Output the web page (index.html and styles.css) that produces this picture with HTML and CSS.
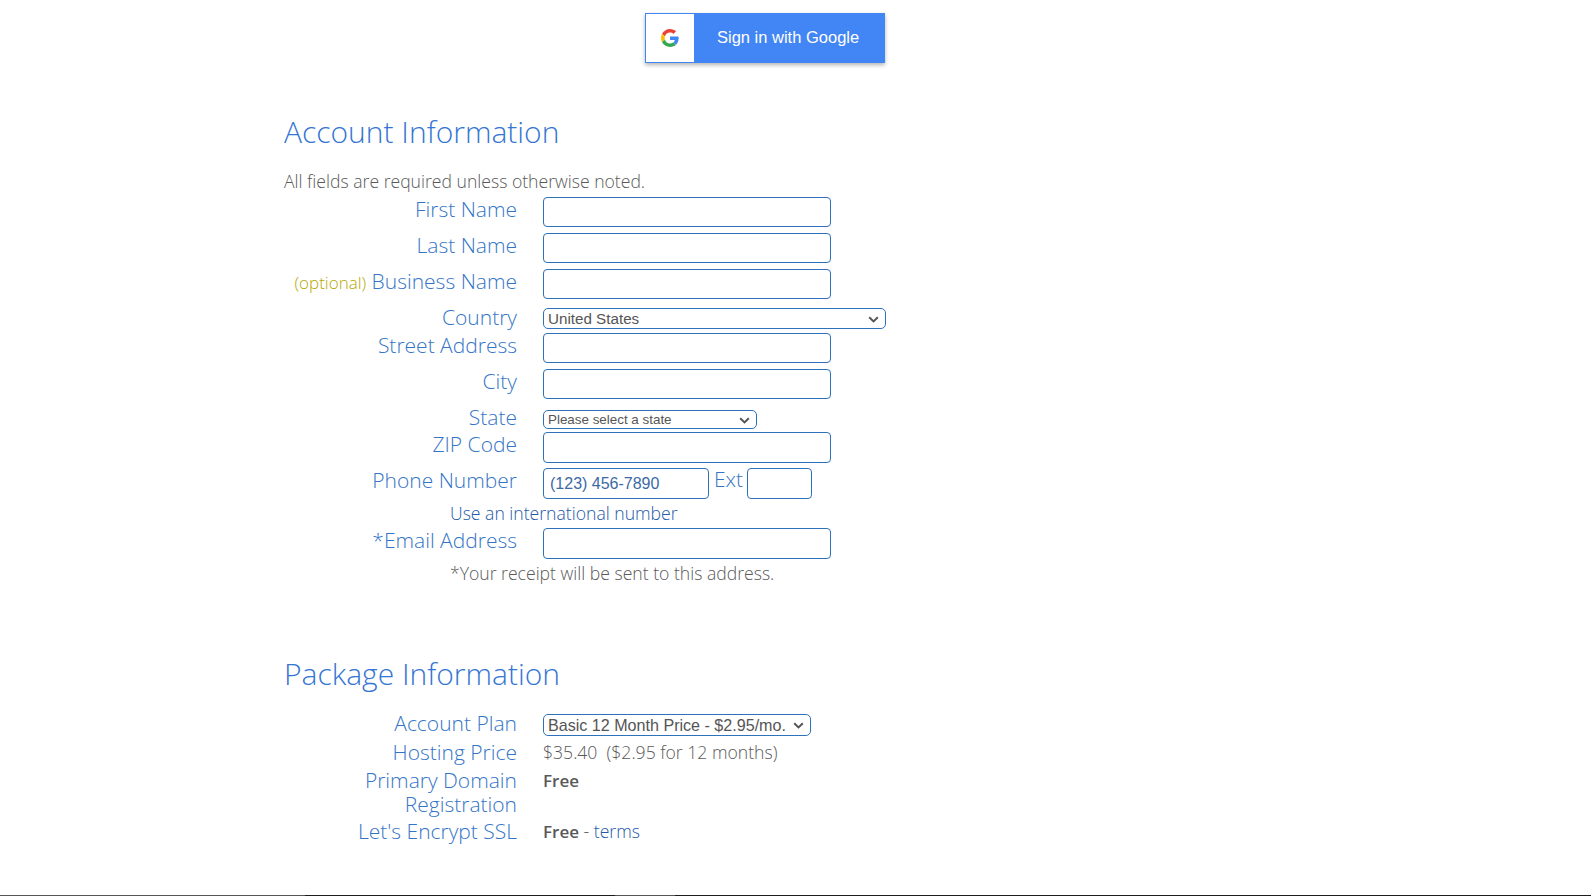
FILE: index.html
```html
<!DOCTYPE html>
<html lang="en">
<head>
<meta charset="utf-8">
<title>Account Information</title>
<link rel="stylesheet" href="styles.css">
</head>
<body>
<div class="google-wrap">
  <a class="google-btn">
    <span class="google-icon">
      <svg width="18" height="18" viewBox="0 0 48 48">
        <path fill="#EA4335" d="M24 9.5c3.54 0 6.71 1.22 9.21 3.6l6.85-6.85C35.9 2.38 30.47 0 24 0 14.62 0 6.51 5.38 2.56 13.22l7.98 6.19C12.43 13.72 17.74 9.5 24 9.5z"/>
        <path fill="#4285F4" d="M46.98 24.55c0-1.57-.15-3.09-.38-4.55H24v9.02h12.94c-.58 2.96-2.26 5.48-4.78 7.18l7.73 6c4.51-4.18 7.09-10.36 7.09-17.65z"/>
        <path fill="#FBBC05" d="M10.53 28.59c-.48-1.45-.76-2.99-.76-4.59s.27-3.14.76-4.59l-7.98-6.19C.92 16.46 0 20.12 0 24c0 3.88.92 7.54 2.56 10.78l7.97-6.19z"/>
        <path fill="#34A853" d="M24 48c6.48 0 11.93-2.13 15.89-5.81l-7.73-6c-2.15 1.45-4.92 2.3-8.16 2.3-6.26 0-11.57-4.22-13.47-9.91l-7.98 6.19C6.51 42.62 14.62 48 24 48z"/>
      </svg>
    </span>
    <span class="google-text">Sign in with Google</span>
  </a>
</div>

<main class="content">
  <h2 class="heading heading-account">Account Information</h2>
  <p class="note">All fields are required unless otherwise noted.</p>

  <div class="row row-input">
    <label class="label">First Name</label>
    <input class="field" type="text">
  </div>
  <div class="row row-input">
    <label class="label">Last Name</label>
    <input class="field" type="text">
  </div>
  <div class="row row-input">
    <label class="label"><span class="optional">(optional)</span> Business Name</label>
    <input class="field" type="text">
  </div>
  <div class="row row-country">
    <label class="label">Country</label>
    <span class="select-wrap">
      <select class="select select-country"><option>United States</option></select>
      <svg class="chevron" width="11" height="7" viewBox="0 0 11 7"><path d="M1.2 1.2 5.5 5.4 9.8 1.2" fill="none" stroke="#555" stroke-width="2"/></svg>
    </span>
  </div>
  <div class="row row-input">
    <label class="label">Street Address</label>
    <input class="field" type="text">
  </div>
  <div class="row row-input">
    <label class="label">City</label>
    <input class="field" type="text">
  </div>
  <div class="row row-state">
    <label class="label">State</label>
    <span class="select-wrap">
      <select class="select select-state"><option>Please select a state</option></select>
      <svg class="chevron" width="11" height="7" viewBox="0 0 11 7"><path d="M1.2 1.2 5.5 5.4 9.8 1.2" fill="none" stroke="#555" stroke-width="2"/></svg>
    </span>
  </div>
  <div class="row row-input">
    <label class="label">ZIP Code</label>
    <input class="field field-tall" type="text">
  </div>
  <div class="row row-phone">
    <label class="label">Phone Number</label>
    <input class="field field-tall field-phone" type="text" value="(123) 456-7890">
    <span class="ext-label">Ext</span>
    <input class="field field-tall field-ext" type="text">
  </div>
  <div class="aside aside-intl"><a class="intl-link">Use an international number</a></div>
  <div class="row row-email">
    <label class="label">*Email Address</label>
    <input class="field field-tall" type="text">
  </div>
  <div class="aside receipt">*Your receipt will be sent to this address.</div>

  <h2 class="heading heading-package">Package Information</h2>

  <div class="row row-plan">
    <label class="label">Account Plan</label>
    <span class="select-wrap">
      <select class="select select-plan"><option>Basic 12 Month Price - $2.95/mo.</option></select>
      <svg class="chevron" width="11" height="7" viewBox="0 0 11 7"><path d="M1.2 1.2 5.5 5.4 9.8 1.2" fill="none" stroke="#555" stroke-width="2"/></svg>
    </span>
  </div>
  <div class="row row-text">
    <div class="label">Hosting Price</div>
    <div class="value">$35.40&nbsp; ($2.95 for 12 months)</div>
  </div>
  <div class="row row-text row-domain">
    <div class="label">Primary Domain Registration</div>
    <div class="value"><strong class="free">Free</strong></div>
  </div>
  <div class="row row-text">
    <div class="label">Let's Encrypt SSL</div>
    <div class="value"><strong class="free">Free</strong> - <a class="terms">terms</a></div>
  </div>
</main>
<div class="bottom-rule">
  <span class="rule-seg rule-a"></span>
  <span class="rule-seg rule-b"></span>
  <span class="rule-seg rule-c"></span>
  <span class="rule-seg rule-d"></span>
</div>
</body>
</html>
```
FILE: styles.css
```css
html, body { margin: 0; padding: 0; height: 896px; overflow: hidden; background: #fff; }
body {
  position: relative;
  font-family: "Open Sans", "Liberation Sans", sans-serif;
  font-weight: 300;
  color: #555;
}
.google-wrap { display: flex; padding: 13px 0 0 645px; height: 50px; }
.google-btn {
  display: flex;
  width: 240px;
  height: 50px;
  box-sizing: border-box;
  background: #4285f4;
  border: 1px solid #4285f4;
  box-shadow: 0 2px 4px rgba(0,0,0,.3);
  color: #fff;
}
.google-icon { width: 48px; background: #fff; display: flex; align-items: center; justify-content: center; }
.google-text {
  flex: 1;
  padding-left: 23px;
  font: 400 16.5px/47px "Liberation Sans", Arial, sans-serif;
}
.content { padding-left: 284px; width: 800px; }
.heading {
  margin: 0;
  font-size: 30px;
  line-height: 40px;
  font-weight: 300;
  color: #3575d3;
}
.heading-account { margin-top: 49px; }
.heading-package { margin-top: 68px; }
.note { margin: 17px 0 0; font-size: 17.6px; line-height: 24px; height: 28px; color: #595959; }
.row { display: flex; align-items: flex-start; }
.label {
  flex: none;
  width: 233px;
  margin-right: 26px;
  text-align: right;
  font-size: 21px;
  line-height: 24px;
  color: #3575c6;
}
.optional { font-size: 17px; color: #b5a800; }
.field {
  box-sizing: border-box;
  width: 288px;
  height: 30px;
  margin: 0;
  padding: 0 6px;
  border: 1px solid #2f72bc;
  border-radius: 4px;
  background: #fff;
  font: 400 16px "Liberation Sans", Arial, sans-serif;
  color: #3b6aa5;
  outline: none;
}
.field-tall { height: 31px; }
.row-input { height: 36px; }
.select-wrap { position: relative; display: block; }
.select {
  display: block;
  box-sizing: border-box;
  margin: 0;
  padding: 0 0 0 4px;
  border: 1px solid #2f72bc;
  border-radius: 5px;
  background: #fff;
  font-family: "Liberation Sans", Arial, sans-serif;
  font-weight: 400;
  color: #555;
  outline: none;
  appearance: none;
  -webkit-appearance: none;
}
.chevron { position: absolute; right: 7px; top: 50%; margin-top: -3px; pointer-events: none; }
.row-country { height: 28px; }
.row-country .select-wrap { margin-top: 3px; }
.row-state { height: 27px; }
.row-state .select-wrap { margin-top: 5px; }
.select-country { width: 343px; height: 21px; font-size: 15.2px; }
.select-state { width: 214px; height: 19px; font-size: 13.4px; }
.row-phone { height: 33px; }
.field-phone { width: 166px; }
.ext-label { margin: 0 4px 0 5px; font-size: 21px; line-height: 23px; color: #3575c6; }
.field-ext { width: 65px; }
.row-email { height: 33px; }
.aside { padding-left: 166px; font-size: 17.6px; line-height: 24px; height: 25px; }
.aside-intl { height: 27px; }
.intl-link { color: #2458a8; }
.receipt { color: #595959; }
.row-plan { margin-top: 20px; height: 26px; }
.row-plan .label { margin-top: -3px; }
.select-plan { width: 268px; height: 22px; font-size: 16.1px; }
.row-text { margin-bottom: 3.5px; }
.row-domain { margin-bottom: 2.5px; }
.row-text .label { padding-top: 1px; line-height: 23.5px; }
.value { font-size: 17.6px; line-height: 24px; color: #595959; }
.free { font-size: 17px; font-weight: 600; color: #595959; }
.terms { color: #2458a8; }
.bottom-rule { position: absolute; left: 0; right: 0; bottom: 0; height: 1px; display: flex; }
.rule-seg { display: block; height: 1px; }
.rule-a { width: 305px; background: #555; }
.rule-b { width: 310px; background: #1c1c1c; }
.rule-c { width: 60px; background: #555; }
.rule-d { flex: 1; background: #1c1c1c; }
```
